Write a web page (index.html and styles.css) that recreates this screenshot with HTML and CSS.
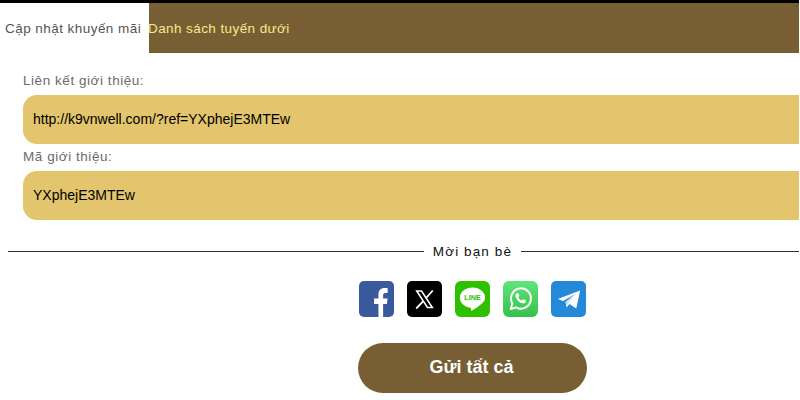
FILE: index.html
```html
<!DOCTYPE html>
<html lang="vi">
<head>
<meta charset="utf-8">
<title>Mời bạn bè</title>
<link rel="stylesheet" href="styles.css">
</head>
<body>
<div class="page">
  <nav class="tabs">
    <div class="tab tab-active">Cập nhật khuyến mãi</div>
    <div class="tab tab-other"><span class="tab-label">Danh sách tuyến dưới</span></div>
  </nav>
  <section class="form">
    <div class="label label-first">Liên kết giới thiệu:</div>
    <div class="field">http://k9vnwell.com/?ref=YXphejE3MTEw</div>
    <div class="label">Mã giới thiệu:</div>
    <div class="field">YXphejE3MTEw</div>
  </section>
  <div class="divider"><span class="line"></span><span class="divider-text">Mời bạn bè</span><span class="line line-right"></span></div>
  <div class="socials">
    <svg class="icon" viewBox="0 0 36 36" preserveAspectRatio="none"><rect width="36" height="36" rx="5" fill="#3b5a9e"/><path d="M20 36V23h-4.500v-5.500H20v-4.300C20 9 22.800 7 26.300 7c1.400 0 2.500.1 3.200.2v4.900h-2.300c-1.900 0-2.400 1-2.400 2.400v3h4.600l-.7 5.500H24.800v13z" fill="#fff"/></svg>
    <svg class="icon" viewBox="0 0 36 36" preserveAspectRatio="none"><rect width="36" height="36" rx="5" fill="#000"/><path d="M10 10h5l11 16.500h-5z" fill="none" stroke="#fff" stroke-width="1.600"/><path d="M26.500 9.500 19.300 17.400M16.700 20.200 9.500 27.500" fill="none" stroke="#fff" stroke-width="1.800"/></svg>
    <svg class="icon" viewBox="0 0 36 36" preserveAspectRatio="none"><rect width="36" height="36" rx="6" fill="#2fc000"/><path d="M18 6.500c-7.200 0-13 4.500-13 10.200 0 5 4.600 9.200 10.800 10 .9.200.8.700.6 2.300-.1.700.3 1 1 .6 2.500-1.400 8.600-5.100 11.200-8.100 1.600-1.600 2.400-3.100 2.400-4.800 0-5.700-5.800-10.200-13-10.200z" fill="#fff"/><text x="18" y="19.300" class="line-text">LINE</text></svg>
    <svg class="icon" viewBox="0 0 36 36" preserveAspectRatio="none"><defs><linearGradient id="wa" x1="0" y1="0" x2="0" y2="1"><stop offset="0" stop-color="#62e47c"/><stop offset="1" stop-color="#35c04b"/></linearGradient></defs><rect width="36" height="36" rx="6" fill="url(#wa)"/><path d="M8 28 9.600 22.500A10.200 10.200 0 1 1 13.500 26.400z" fill="none" stroke="#fff" stroke-width="2" stroke-linejoin="round"/><path d="M14 12.300c.5-.5 1.300-.6 1.700 0l.9 2c.2.400.1.800-.2 1.100l-.7.900c.8 1.600 1.900 2.600 3.500 3.400l1-1.100c.3-.3.700-.4 1.100-.2l1.900.9c.5.300.5 1 .2 1.600-.6 1.100-1.900 1.700-3.200 1.400-3.700-.8-6.500-3.600-7.300-7.100-.2-1.100.4-2.100 1.100-2.900z" fill="#fff"/></svg>
    <svg class="icon" viewBox="0 0 36 36" preserveAspectRatio="none"><rect width="36" height="36" rx="5" fill="#2589d8"/><path d="M7 18 30 9.500 26 27.500 19 23 16 26.500 15 21 25 13 12.500 20z" fill="#fff"/><path d="M15 21 25 13 17.500 22 16 26.500z" fill="#c5e0f5"/></svg>
  </div>
  <div class="actions"><button class="send" type="button">Gửi tất cả</button></div>
</div>
</body>
</html>
```
FILE: styles.css
```css
* {
  box-sizing: border-box;
}

html,
body {
  margin: 0;
  padding: 0;
  background: #fff;
}

body {
  width: 799px;
  height: 400px;
  overflow: hidden;
  font-family: "Liberation Sans", Arial, sans-serif;
}

.page {
  display: flex;
  flex-direction: column;
  border-top: 3px solid #000;
}

.tabs {
  display: flex;
  height: 50px;
}

.tab {
  display: flex;
  align-items: center;
  height: 50px;
  font-size: 13.500px;
  letter-spacing: 0.45px;
  white-space: nowrap;
}

.tab-active {
  width: 149px;
  padding-left: 5px;
  color: #555;
  background: #fff;
}

.tab-other {
  flex: 1;
  margin-right: -1px;
  color: #fbe88e;
  background: #775f33;
}

.tab-label {
  margin-left: -1px;
  letter-spacing: 0.41px;
}

.form {
  display: flex;
  flex-direction: column;
  padding-left: 23px;
}

.label {
  height: 27px;
  padding-top: 5px;
  font-size: 13.500px;
  line-height: 16px;
  letter-spacing: 0.55px;
  color: #6b6b6b;
}

.label-first {
  height: 42px;
  padding-top: 20px;
}

.field {
  display: flex;
  align-items: center;
  height: 49px;
  padding-left: 10px;
  padding-bottom: 2px;
  font-size: 14px;
  color: #000;
  background: #e2c56c;
  border-radius: 14px 0 0 14px;
}

.divider {
  display: flex;
  align-items: center;
  height: 20px;
  margin-top: 21px;
  padding-left: 8px;
}

.line {
  flex: 1;
  height: 1px;
  background: #333;
}

.line-right {
  flex: 0 0 278px;
}

.divider-text {
  padding: 0 9px 0 9px;
  font-size: 13.500px;
  letter-spacing: 1.1px;
  color: #111;
}

.socials {
  display: flex;
  gap: 13px;
  margin-top: 20px;
  padding-left: 359px;
}

.icon {
  display: block;
  width: 35px;
  height: 36px;
}

.line-text {
  font-family: "Liberation Sans", Arial, sans-serif;
  font-size: 7.500px;
  font-weight: 700;
  fill: #2fc000;
  text-anchor: middle;
}

.actions {
  margin-top: 26px;
  padding-left: 358px;
}

.send {
  display: block;
  width: 229px;
  height: 50px;
  padding: 0 2px 2px 0;
  border: 0;
  border-radius: 25px;
  font-family: "Liberation Sans", Arial, sans-serif;
  font-size: 18px;
  font-weight: 700;
  color: #fff;
  background: #775f33;
}
```
